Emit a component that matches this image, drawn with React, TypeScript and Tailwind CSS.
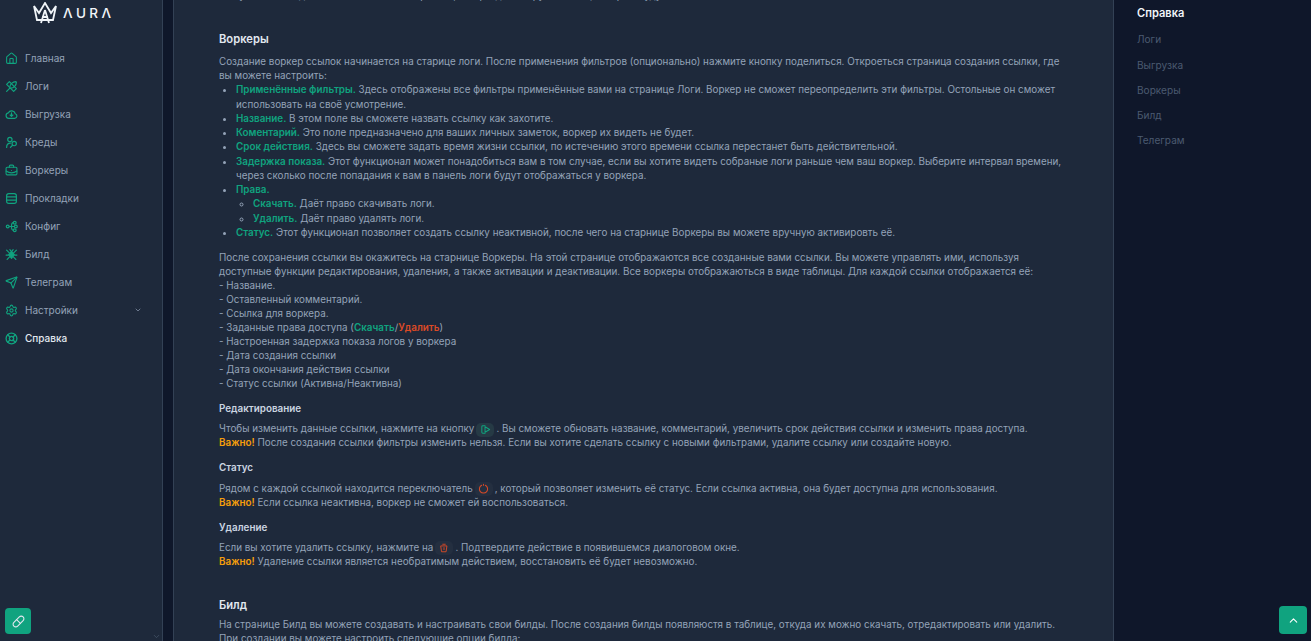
import React from "react";
import {
  ChevronDown,
  ChevronUp,
  Settings,
  House,
  LifeBuoy,
  BriefcaseBusiness,
  Send,
  Pill,
} from "lucide-react";

type IconProps = { size?: number; className?: string };

const Svg: React.FC<IconProps & { children: React.ReactNode }> = ({ size = 14, className, children }) => (
  <svg width={size} height={size} viewBox="0 0 24 24" fill="none" stroke="currentColor" strokeWidth="2.2" strokeLinecap="round" strokeLinejoin="round" className={className}>
    {children}
  </svg>
);

const LogsIcon: React.FC<IconProps> = (p) => (
  <Svg {...p}>
    <path d="M3 8 L8 3 L21 16 L16 21 Z" />
    <path d="M20 3 C14 3 9 8 9 13 M21 4 C21 10 16 15 11 15" />
    <path d="M3 21 L9 15" />
  </Svg>
);

const CloudIcon: React.FC<IconProps> = (p) => (
  <Svg {...p}>
    <path d="M7 19 a5 5 0 0 1 -1 -9.9 a7 7 0 0 1 13 1.5 a4.3 4.3 0 0 1 -1 8.4 Z" />
    <path d="M12 9 v6 M9.5 13 L12 15.5 L14.5 13" />
  </Svg>
);

const CredsIcon: React.FC<IconProps> = (p) => (
  <Svg {...p}>
    <circle cx="9" cy="6.5" r="4" />
    <path d="M3 21 c0 -5 3 -8 7 -8" />
    <circle cx="17" cy="14" r="4" />
    <path d="M14 17 L10 21" />
  </Svg>
);

const ServerIcon: React.FC<IconProps> = (p) => (
  <Svg {...p}>
    <rect x="3" y="3" width="18" height="18" rx="4" />
    <path d="M3 9 H21 M3 15 H21" />
  </Svg>
);

const ConfigIcon: React.FC<IconProps> = (p) => (
  <Svg {...p}>
    <circle cx="5" cy="12" r="2.6" />
    <circle cx="18" cy="5" r="2.6" />
    <circle cx="20" cy="12" r="2.6" />
    <circle cx="18" cy="19" r="2.6" />
    <path d="M8 12 H17 M12 12 C12 7 13 5 15.5 5 M12 12 C12 17 13 19 15.5 19" />
  </Svg>
);

const BuildIcon: React.FC<IconProps> = (p) => (
  <Svg {...p}>
    <path d="M12 7 L17 12 L12 19 L7 12 Z" fill="currentColor" />
    <path d="M3 4 L8 9 M21 4 L16 9 M2 13 H7 M22 13 H17 M4 21 L9 16 M20 21 L15 16 M9 3 L12 7 L15 3" />
  </Svg>
);

const EditIcon: React.FC<IconProps> = (p) => (
  <Svg {...p}>
    <path d="M11 4 H6 a2 2 0 0 0 -2 2 V18 a2 2 0 0 0 2 2 H11" />
    <path d="M11 6 L21 12 L11 18 Z" />
  </Svg>
);

const PowerIcon: React.FC<IconProps> = (p) => (
  <Svg {...p}>
    <path d="M8 5 a9 9 0 1 0 8 0" />
    <path d="M12 3 V5" />
  </Svg>
);

const TrashIcon: React.FC<IconProps> = (p) => (
  <Svg {...p}>
    <path d="M5 7 H19 L17 21 H7 Z" />
    <path d="M9 3 H15 M12 11 V16" />
  </Svg>
);

const menu = [
  { name: "Главная", icon: House },
  { name: "Логи", icon: LogsIcon },
  { name: "Выгрузка", icon: CloudIcon },
  { name: "Креды", icon: CredsIcon },
  { name: "Воркеры", icon: BriefcaseBusiness },
  { name: "Прокладки", icon: ServerIcon },
  { name: "Конфиг", icon: ConfigIcon },
  { name: "Билд", icon: BuildIcon },
  { name: "Телеграм", icon: Send },
];

const toc = ["Логи", "Выгрузка", "Воркеры", "Билд", "Телеграм"];

const G: React.FC<{ children: React.ReactNode }> = ({ children }) => (
  <b className="font-semibold text-[#10a37f]">{children}</b>
);

const Warn = () => <b className="font-semibold text-[#f59e0b]">Важно!</b>;

const Chip: React.FC<{ children: React.ReactNode; className?: string }> = ({ children, className }) => (
  <span className={`mx-[2px] my-[-3px] inline-flex h-[14px] w-[18px] items-center justify-center rounded-[5px] align-middle ${className}`}>
    {children}
  </span>
);

const Logo = () => (
  <div className="flex h-[26px] items-center gap-[6px] pl-[33px]">
    <svg width="24" height="22" viewBox="0 0 24 22" fill="none" stroke="#f1f5f9" strokeWidth="1.8">
      <path d="M1 4 L6 11 L12 1 L18 11 L23 4 L20 18 L4 18 Z" />
      <path d="M12 8 L8 21 M12 8 L16 21 M9 15 H15" />
    </svg>
    <span className="text-[13.5px] font-medium tracking-[3.4px] text-[#f1f5f9]">ΛURΛ</span>
  </div>
);

export default function App() {
  return (
    <div className="relative flex h-screen overflow-hidden bg-[#0f172a] font-['Inter',sans-serif] text-[9.85px] leading-[14.25px] text-[#94a3b8]">
      <aside className="flex h-full w-[163px] shrink-0 flex-col border-r border-[#334155] bg-[#1e293b]">
        <Logo />
        <nav className="mt-[18px] flex flex-col text-[10px]">
          {menu.map((item) => (
            <div key={item.name} className="flex h-[28px] items-center gap-[7px] pl-[5px]">
              <item.icon size={13} className="text-[#10a37f]" />
              <span>{item.name}</span>
            </div>
          ))}
          <div className="flex h-[28px] items-center gap-[7px] pl-[5px] pr-[20px]">
            <Settings size={13} className="text-[#10a37f]" />
            <span className="flex-1">Настройки</span>
            <ChevronDown size={8} />
          </div>
          <div className="flex h-[28px] items-center gap-[7px] pl-[5px] font-medium text-[#e2e8f0]">
            <LifeBuoy size={13} strokeWidth={2.4} className="text-[#10a37f]" />
            <span>Справка</span>
          </div>
        </nav>
      </aside>

      <main className="ml-[10px] h-full w-[941px] shrink-0 overflow-hidden border-x border-[#334155] bg-[#1e293b] pl-[45px] pr-[45px]">
        <p className="mt-[-12px] h-[14.25px] whitespace-nowrap">
          В случае необходимости вы можете настроить фильтры для выгрузки логов, которые будут.
        </p>
        <h2 className="mt-[29px] text-[11.2px] font-semibold leading-[16px] text-[#e2e8f0]">Воркеры</h2>
        <p className="mt-[6.5px]">
          Создание воркер ссылок начинается на старице логи. После применения фильтров (опционально) нажмите кнопку поделиться. Откроеться страница создания ссылки, где вы можете настроить:
        </p>
        <ul className="ml-[17px] list-disc">
          <li><G>Применённые фильтры.</G> Здесь отображены все фильтры применённые вами на странице Логи. Воркер не сможет переопределить эти фильтры. Остольные он сможет использовать на своё усмотрение.</li>
          <li><G>Название.</G> В этом поле вы сможете назвать ссылку как захотите.</li>
          <li><G>Коментарий.</G> Это поле предназначено для ваших личных заметок, воркер их видеть не будет.</li>
          <li><G>Срок действия.</G> Здесь вы сможете задать время жизни ссылки, по истечению этого времени ссылка перестанет быть действительной.</li>
          <li><G>Задержка показа.</G> Этот функционал может понадобиться вам в том случае, если вы хотите видеть собраные логи раньше чем ваш воркер. Выберите интервал времени, через сколько после попадания к вам в панель логи будут отображаться у воркера.</li>
          <li>
            <G>Права.</G>
            <ul className="ml-[17px] list-[circle]">
              <li><G>Скачать.</G> Даёт право скачивать логи.</li>
              <li><G>Удалить.</G> Даёт право удалять логи.</li>
            </ul>
          </li>
          <li><G>Статус.</G> Этот функционал позволяет создать ссылку неактивной, после чего на старнице Воркеры вы можете вручную активировть её.</li>
        </ul>
        <p className="mt-[11px] leading-[14px]">
          После сохранения ссылки вы окажитесь на старнице Воркеры. На этой странице отображаются все созданные вами ссылки. Вы можете управлять ими, используя доступные функции редактирования, удаления, а также активации и деактивации. Все воркеры отображаються в виде таблицы. Для каждой ссылки отображается её:
          <br />- Название.
          <br />- Оставленный комментарий.
          <br />- Ссылка для воркера.
          <br />- Заданные права доступа (<G>Скачать</G>/<b className="font-semibold text-[#dc4a26]">Удалить</b>)
          <br />- Настроенная задержка показа логов у воркера
          <br />- Дата создания ссылки
          <br />- Дата окончания действия ссылки
          <br />- Статус ссылки (Активна/Неактивна)
        </p>
        <h3 className="mt-[11px] font-semibold text-[#cbd5e1]">Редактирование</h3>
        <p className="mt-[6px] leading-[14px]">
          Чтобы изменить данные ссылки, нажмите на кнопку
          <Chip className="bg-[#263a45]"><EditIcon size={11} className="text-[#10a37f]" /></Chip>
          . Вы сможете обновать название, комментарий, увеличить срок действия ссылки и изменить права доступа.
          <br /><Warn /> После создания ссылки фильтры изменить нельзя. Если вы хотите сделать ссылку с новыми фильтрами, удалите ссылку или создайте новую.
        </p>
        <h3 className="mt-[11px] font-semibold text-[#cbd5e1]">Статус</h3>
        <p className="mt-[6px] leading-[14px]">
          Рядом с каждой ссылкой находится переключатель
          <Chip className="bg-[#242f40]"><PowerIcon size={11} className="text-[#dc4a26]" /></Chip>
          , который позволяет изменить её статус. Если ссылка активна, она будет доступна для использования.
          <br /><Warn /> Если ссылка неактивна, воркер не сможет ей воспользоваться.
        </p>
        <h3 className="mt-[11px] font-semibold text-[#cbd5e1]">Удаление</h3>
        <p className="mt-[6px] leading-[14px]">
          Если вы хотите удалить ссылку, нажмите на
          <Chip className="bg-[#242f40]"><TrashIcon size={10} className="text-[#dc4a26]" /></Chip>
          . Подтвердите действие в появившемся диалоговом окне.
          <br /><Warn /> Удаление ссылки является необратимым действием, восстановить её будет невозможно.
        </p>
        <h2 className="mt-[29px] text-[11.2px] font-semibold leading-[16px] text-[#e2e8f0]">Билд</h2>
        <p className="mt-[4.5px] leading-[14px]">
          На странице Билд вы можете создавать и настраивать свои билды. После создания билды появляюстя в таблице, откуда их можно скачать, отредактировать или удалить. При создании вы можете настроить следующие опции билда:
        </p>
      </main>

      <aside className="flex flex-1 flex-col pl-[23px] pt-[6px]">
        <div className="h-[14px] text-[11.1px] font-semibold leading-[14px] text-[#f1f5f9]">Справка</div>
        <div className="mt-[7px] flex flex-col text-[10.1px]">
          {toc.map((t) => (
            <div key={t} className="flex h-[25.2px] items-center text-[#4b5a70]">{t}</div>
          ))}
        </div>
      </aside>

      <button className="absolute bottom-[7px] left-[5px] flex h-[26px] w-[26px] items-center justify-center rounded-[4px] bg-[#10a37f] text-[#e2e8f0]">
        <Pill size={13} />
      </button>
      <button className="absolute bottom-[7px] right-[4px] flex h-[28px] w-[28px] items-center justify-center rounded-[4px] bg-[#10a37f] text-white">
        <ChevronUp size={13} />
      </button>
      <ChevronDown size={9} className="absolute bottom-0 left-[152px] text-[#475569]" />
    </div>
  );
}
